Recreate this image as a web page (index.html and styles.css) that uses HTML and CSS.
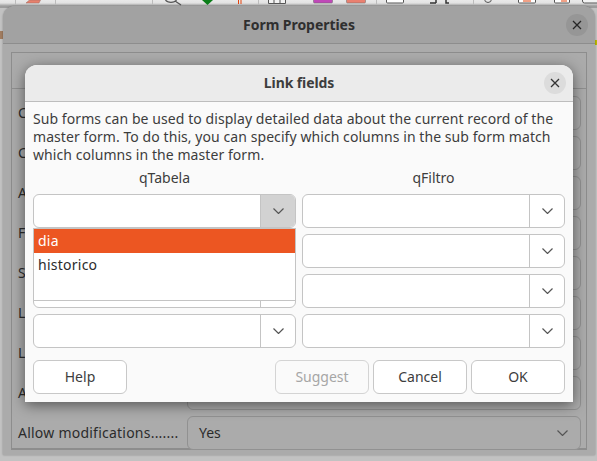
FILE: index.html
```html
<!DOCTYPE html>
<html lang="en">
<head>
<meta charset="utf-8">
<title>Link fields</title>
<link rel="stylesheet" href="styles.css">
</head>
<body>
<div class="toolbar">
  <span class="tb-sep s0"></span><span class="tb-sep s1"></span><span class="tb-sep s2"></span><span class="tb-sep s3"></span><span class="tb-sep s4"></span><span class="tb-sep s5"></span>
  <svg class="tb-icons" width="597" height="8" viewBox="0 0 597 8">
    <path d="M29.500 0h11l-1.500 3h-13z" fill="#e8806c" stroke="#9a6a60" stroke-width=".5"/>
    <path d="M165.500 0a6 4 0 0 0 11 0M175 1l6 4" fill="none" stroke="#555" stroke-width="1.300"/>
    <path d="M202 0h11l-5.500 5z" fill="#0a7d18"/>
    <path d="M238.500 0v4M241 0v4" stroke="#e4420c"/>
    <path d="M268.500 0v3.500h17V0M274 0v3.500M280 0v3.500" fill="#f2f2f2" stroke="#555"/>
    <rect x="313.500" y="-3" width="19" height="6" rx="1" fill="#c048b8" stroke="#666" stroke-width=".5"/>
    <rect x="346.500" y="-3" width="19" height="6" rx="1" fill="#ea8070" stroke="#666" stroke-width=".5"/>
    <rect x="386.500" y="-3" width="17" height="6" rx="1" fill="#fff" stroke="#555"/>
    <path d="M430 3h6M436 0v3M449 3h-3V0" fill="none" stroke="#333" stroke-width="1.500"/>
    <circle cx="488" cy="-1" r="3.500" fill="none" stroke="#555"/>
    <rect x="518.500" y="-3" width="17" height="6" rx="1" fill="#fff" stroke="#555"/>
    <path d="M523 1h8" stroke="#e4420c"/>
    <rect x="554.500" y="-3" width="15" height="6" rx="1" fill="#fff" stroke="#555"/>
    <path d="M561 1h6" stroke="#e4420c"/>
    <rect x="582.500" y="-3" width="18" height="6" rx="2" fill="#f2f2f2" stroke="#555"/>
  </svg>
</div>
<span class="edge-mark edge-left"></span>
<span class="edge-mark edge-right"></span>

<section class="window">
  <header class="window-title">
    <h1>Form Properties</h1>
    <span class="close close-back"><svg width="10" height="10" viewBox="0 0 10 10"><path d="M1 1l8 8M9 1l-8 8"/></svg></span>
  </header>
  <div class="frame">
    <div class="frame-tabs"></div>
    <div class="prop"><span class="prop-label">C</span><span class="prop-field"></span></div>
    <div class="prop"><span class="prop-label">C</span><span class="prop-field"></span></div>
    <div class="prop"><span class="prop-label">A</span><span class="prop-field"></span></div>
    <div class="prop"><span class="prop-label">F</span><span class="prop-field"></span></div>
    <div class="prop"><span class="prop-label">S</span><span class="prop-field"></span></div>
    <div class="prop"><span class="prop-label">L</span><span class="prop-field"></span></div>
    <div class="prop"><span class="prop-label">L</span><span class="prop-field"></span></div>
    <div class="prop"><span class="prop-label">A</span><span class="prop-field"></span></div>
    <div class="prop"><span class="prop-label">Allow modifications.......</span>
      <span class="prop-field"><span class="prop-value">Yes</span><svg class="chev" width="11" height="6" viewBox="0 0 11 6"><path d="M.5.5l5 5 5-5"/></svg></span>
    </div>
  </div>
</section>

<section class="dialog">
  <header class="dialog-title">
    <h2>Link fields</h2>
    <span class="close close-front"><svg width="10" height="10" viewBox="0 0 10 10"><path d="M1 1l8 8M9 1l-8 8"/></svg></span>
  </header>
  <div class="dialog-body">
    <p class="intro">Sub forms can be used to display detailed data about the current record of the master form. To do this, you can specify which columns in the sub form match which columns in the master form.</p>
    <div class="columns">
      <div class="column">
        <div class="col-head">qTabela</div>
        <div class="combo open"><span class="combo-input"></span><span class="combo-btn"><svg class="chev" width="11" height="6" viewBox="0 0 11 6"><path d="M.5.5l5 5 5-5"/></svg></span></div>
        <div class="combo"><span class="combo-input"></span><span class="combo-btn"><svg class="chev" width="11" height="6" viewBox="0 0 11 6"><path d="M.5.5l5 5 5-5"/></svg></span></div>
        <div class="combo"><span class="combo-input"></span><span class="combo-btn"><svg class="chev" width="11" height="6" viewBox="0 0 11 6"><path d="M.5.5l5 5 5-5"/></svg></span></div>
        <div class="combo"><span class="combo-input"></span><span class="combo-btn"><svg class="chev" width="11" height="6" viewBox="0 0 11 6"><path d="M.5.5l5 5 5-5"/></svg></span></div>
        <ul class="dropdown">
          <li class="selected">dia</li>
          <li>historico</li>
        </ul>
      </div>
      <div class="column">
        <div class="col-head">qFiltro</div>
        <div class="combo"><span class="combo-input"></span><span class="combo-btn"><svg class="chev" width="11" height="6" viewBox="0 0 11 6"><path d="M.5.5l5 5 5-5"/></svg></span></div>
        <div class="combo"><span class="combo-input"></span><span class="combo-btn"><svg class="chev" width="11" height="6" viewBox="0 0 11 6"><path d="M.5.5l5 5 5-5"/></svg></span></div>
        <div class="combo"><span class="combo-input"></span><span class="combo-btn"><svg class="chev" width="11" height="6" viewBox="0 0 11 6"><path d="M.5.5l5 5 5-5"/></svg></span></div>
        <div class="combo"><span class="combo-input"></span><span class="combo-btn"><svg class="chev" width="11" height="6" viewBox="0 0 11 6"><path d="M.5.5l5 5 5-5"/></svg></span></div>
      </div>
    </div>
    <div class="actions">
      <button class="btn" type="button">Help</button>
      <span class="actions-gap"></span>
      <button class="btn disabled" type="button">Suggest</button>
      <button class="btn" type="button">Cancel</button>
      <button class="btn" type="button">OK</button>
    </div>
  </div>
</section>
</body>
</html>
```
FILE: styles.css
```css
* { box-sizing: border-box; }
html, body { margin: 0; padding: 0; }
body {
  width: 597px;
  height: 461px;
  position: relative;
  overflow: hidden;
  background: #c2c2c2;
  font-family: "Noto Sans", "Open Sans", sans-serif;
  font-size: 14px;
  color: #3d3d3d;
}
h1, h2, p, ul { margin: 0; padding: 0; }

.toolbar {
  position: absolute;
  left: 0;
  top: 0;
  width: 597px;
  height: 8px;
  background: linear-gradient(#e9e9e9 0, #e2e2e2 3px, #9c9c9c 6px, #9c9c9c 8px);
}
.tb-sep { position: absolute; top: 0; width: 1px; height: 5px; background: #bcbcbc; }
.s0 { left: 15px; }
.s1 { left: 55px; }
.s2 { left: 152px; }
.s3 { left: 258px; }
.s4 { left: 376px; }
.s5 { left: 473px; }
.tb-icons { position: absolute; left: 0; top: 0; display: block; }
.edge-mark { position: absolute; width: 3px; }
.edge-left { left: 0; top: 31px; height: 8px; background: #a07c60; }
.edge-right { right: 0; top: 40px; height: 5px; background: #b8b800; }

.window {
  position: absolute;
  left: 3px;
  top: 6px;
  width: 592px;
  height: 449px;
  border-radius: 12px 12px 0 0;
  background: #ababab;
  box-shadow: 0 0 2px rgba(0,0,0,.35);
  display: flex;
  flex-direction: column;
}
.window-title {
  height: 38px;
  flex: none;
  border-bottom: 1px solid #8d8d8d;
  border-radius: 12px 12px 0 0;
  background: #a2a2a2;
  display: flex;
  align-items: center;
  justify-content: center;
  position: relative;
}
.window-title h1 { font-size: 14px; font-weight: 700; color: #2f2f2f; letter-spacing: -0.05px; }
.close {
  position: absolute;
  width: 22px;
  height: 22px;
  border-radius: 50%;
  display: flex;
  align-items: center;
  justify-content: center;
}
.close svg path { fill: none; stroke: #333; stroke-width: 1.300; }
.close-back { right: 7px; top: 8px; background: #969696; }
.close-back svg path { stroke: #272727; }
.close-front { right: 7px; top: 7px; background: #dcdcdc; }

.frame {
  margin: 8px 8px 0 8px;
  height: 398px;
  border: 1px solid #8d8d8d;
  border-bottom-width: 2px;
  padding: 0 5px 0 6px;
}
.frame-tabs { height: 36px; border-bottom: 1px solid #8f8f8f; margin: 0 -5px 7px -6px; }
.prop { display: flex; align-items: center; height: 34px; margin-bottom: 6px; }
.prop-label { width: 169px; flex: none; white-space: nowrap; color: #2b2b2b; letter-spacing: .23px; padding-bottom: 2px; }
.prop-field {
  flex: 1;
  height: 34px;
  border: 1px solid #919191;
  border-radius: 6px;
  background: #ababab;
  padding-left: 11px;
  display: flex;
  align-items: center;
  justify-content: space-between;
  color: #2b2b2b;
}
.prop-value { padding-bottom: 2px; }
.prop-field .chev { margin-right: 12px; }
.chev { display: block; }
.chev path { fill: none; stroke: #555; stroke-width: 1.200; }

.dialog {
  position: absolute;
  left: 25px;
  top: 65px;
  width: 548px;
  height: 337px;
  border-radius: 12px 12px 0 0;
  background: #fafafa;
  box-shadow: 0 3px 14px rgba(0,0,0,.5);
  display: flex;
  flex-direction: column;
}
.dialog-title {
  height: 37px;
  flex: none;
  padding-bottom: 2px;
  background: #ebebeb;
  border-bottom: 1px solid #bdbdbd;
  border-radius: 12px 12px 0 0;
  display: flex;
  align-items: center;
  justify-content: center;
  position: relative;
}
.dialog-title h2 { font-size: 14px; font-weight: 700; color: #3d3d3d; letter-spacing: -0.1px; }
.dialog-body { padding: 8px 8px 8px; flex: 1; display: flex; flex-direction: column; }
.intro { font-size: 14px; line-height: 18px; height: 57px; letter-spacing: 0.07px; }
.columns { display: flex; gap: 6px; }
.column { width: 263px; position: relative; display: flex; flex-direction: column; gap: 6px; }
.col-head { text-align: center; height: 21px; line-height: 22px; }
.combo {
  height: 34px;
  display: flex;
  border: 1px solid #c4c4c4;
  border-radius: 6px;
  background: #fff;
  overflow: hidden;
}
.combo-input { flex: 1; }
.combo-btn {
  width: 35px;
  flex: none;
  border-left: 1px solid #c4c4c4;
  display: flex;
  align-items: center;
  justify-content: center;
}
.combo.open .combo-btn { background: #d2d2d2; }
.dropdown {
  position: absolute;
  left: 0;
  top: 61px;
  width: 263px;
  height: 73px;
  list-style: none;
  background: #fff;
  border: 1px solid #c4c4c4;
}
.dropdown li { height: 24px; line-height: 24px; padding-left: 4px; color: #2b2b2b; letter-spacing: .25px; }
.dropdown li.selected { background: #ec5622; color: #fff; }

.actions { display: flex; gap: 4px; margin-top: 12px; }
.actions-gap { flex: 1; }
.btn {
  width: 94px;
  height: 34px;
  padding: 0 0 2px;
  font: inherit;
  color: #3d3d3d;
  background: #fff;
  border: 1px solid #c8c8c8;
  border-radius: 6px;
}
.btn.disabled { color: #a6a6a6; background: #fafafa; border-color: #d4d4d4; }
```
